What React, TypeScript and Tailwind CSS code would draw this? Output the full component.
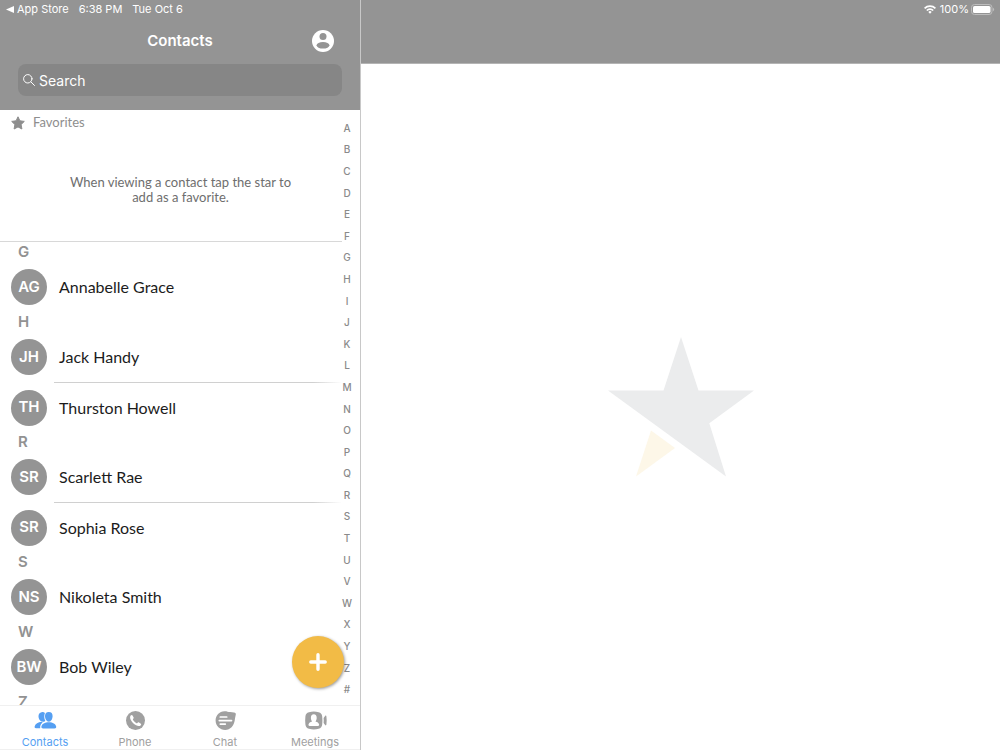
import type { ReactNode } from "react";

type Contact = { initials: string; name: string };
type Section = { letter: string; contacts: Contact[] };

const sections: Section[] = [
  { letter: "G", contacts: [{ initials: "AG", name: "Annabelle Grace" }] },
  {
    letter: "H",
    contacts: [
      { initials: "JH", name: "Jack Handy" },
      { initials: "TH", name: "Thurston Howell" },
    ],
  },
  {
    letter: "R",
    contacts: [
      { initials: "SR", name: "Scarlett Rae" },
      { initials: "SR", name: "Sophia Rose" },
    ],
  },
  { letter: "S", contacts: [{ initials: "NS", name: "Nikoleta Smith" }] },
  { letter: "W", contacts: [{ initials: "BW", name: "Bob Wiley" }] },
  { letter: "Z", contacts: [] },
];

const indexLetters = "ABCDEFGHIJKLMNOPQRSTUVWXYZ#".split("");

function StatusLeft() {
  return (
    <div className="flex h-[18px] items-center pl-[6px] text-[11px] text-white">
      <svg className="mr-[3px] h-[7px] w-2" viewBox="0 0 8 7" fill="currentColor" aria-hidden="true">
        <path d="M8 0v7L0 3.5z" />
      </svg>
      <a href="#app-store">App Store</a>
      <span className="ml-[10px]">6:38 PM</span>
      <span className="ml-[10px]">Tue Oct 6</span>
    </div>
  );
}

function StatusRight() {
  return (
    <div className="flex h-[18px] items-center justify-end pr-[5px] text-[11px] text-white">
      <svg className="mr-1 h-[9px] w-3" viewBox="0 0 24 18" fill="none" stroke="currentColor" strokeWidth="3.4" aria-hidden="true">
        <path d="M1.2 6.6a15.3 15.3 0 0 1 21.6 0M5.6 11a9 9 0 0 1 12.8 0" />
        <path d="M12 17.5l-3.4-3.6a4.8 4.8 0 0 1 6.8 0z" fill="currentColor" stroke="none" />
      </svg>
      <span>100%</span>
      <svg className="ml-[2px] h-[11px] w-6" viewBox="0 0 24 11" aria-hidden="true">
        <rect x="0.5" y="0.5" width="20.5" height="10" rx="3" fill="none" stroke="#bdbdbd" />
        <rect x="2" y="2" width="17.5" height="7" rx="1.6" fill="#fff" />
        <path d="M22 3.8c1.6.5 1.6 2.9 0 3.4z" fill="#bdbdbd" />
      </svg>
    </div>
  );
}

function ContactsIcon() {
  return (
    <svg className="h-[19px] w-[23px]" viewBox="0 0 23 19" fill="currentColor" aria-hidden="true">
      <path d="M7.6 1.200c1.200-.3 2.600 0 3.300.8-.9 2.300-.9 5.600.4 7.700-.4.700-1.200 1-2.300 1-2.700 0-4.500-2.500-4.500-5.400 0-2.300 1.200-3.800 3.100-4.100z" />
      <path d="M7.700 10.800c.5 0 1 .5.700 1-1.700 1.300-2.400 3.100-2.200 5.500H2c-1.200 0-1.600-.9-1.300-2 .7-2.400 3.300-4.300 7-4.500z" />
      <path d="M14.800 1c2.600 0 3.800 1.600 3.800 4.100 0 2.900-1.500 5.600-3.800 5.600S11 8 11 5.100C11 2.600 12.200 1 14.800 1z" />
      <path d="M14.800 11.200c4 0 7 1.800 7.400 4.300.2 1.300-.5 1.900-1.700 1.900H9.100c-1.200 0-1.900-.6-1.700-1.900.4-2.500 3.400-4.300 7.400-4.300z" />
    </svg>
  );
}

function PhoneIcon() {
  return (
    <svg className="h-[19px] w-[19px]" viewBox="0 0 20 20" aria-hidden="true">
      <circle cx="10" cy="10" r="10" fill="currentColor" />
      <path
        d="M4.900 4.700c.7-.8 1.500-.7 2 .1l1 1.700c.4.700.2 1.200-.4 1.700-.4.400-.3.900.1 1.500.9 1.300 1.800 2.200 3 2.900.6.400 1 .4 1.400-.1.500-.6 1-.7 1.700-.3l1.600.9c.8.500.9 1.100.3 1.800-1.200 1.300-3 1.200-5 .2-2.500-1.300-4.400-3.300-5.500-5.600-.9-1.900-1.100-3.700-.2-4.800z"
        fill="#fff"
      />
    </svg>
  );
}

function ChatIcon() {
  return (
    <svg className="h-[19px] w-[21px]" viewBox="0 0 21 19" aria-hidden="true">
      <path
        d="M9.500.2c2.300-.1 3.600.7 5.700.9l3.800.3c1.500.1 2 .9 1.800 2.200-.4 2.200-.7 3.400-1 5.500C19 15 15.200 19 10.200 19 4.900 19 .6 14.900.6 9.600S4.300.4 9.500.2z"
        fill="currentColor"
      />
      <path d="M5.300 6h6.400M4.300 9.600h12.200M5.300 13.100h5" stroke="#fff" strokeWidth="1.700" strokeLinecap="round" />
    </svg>
  );
}

function MeetingsIcon() {
  return (
    <svg className="h-[19px] w-[23px]" viewBox="0 0 23 19" fill="currentColor" aria-hidden="true">
      <path d="M5 1.200c3.200-.9 6.400-.9 9.600 0 2.300.6 3.300 1.800 3.600 4.200.3 2.800.3 5.400 0 8.200-.3 2.400-1.300 3.600-3.600 4.200-3.200.9-6.400.9-9.600 0-2.300-.6-3.300-1.800-3.600-4.200-.3-2.800-.3-5.400 0-8.200C1.700 3 2.700 1.800 5 1.200z" />
      <path
        d="M9.800 3.200c1.900 0 2.900 1.400 2.900 3.600 0 1.600-.5 2.800-1.200 3.700 1.900.4 3.300 1.500 3.600 3 .2.900-.3 1.400-1.100 1.400H5.600c-.8 0-1.300-.5-1.100-1.400.3-1.500 1.700-2.600 3.600-3-.7-.9-1.200-2.100-1.200-3.700 0-2.200 1-3.600 2.900-3.600z"
        fill="#fff"
      />
      <path d="M19.600 7l1.500-2c.6-.7 1.200-.5 1.300.4.400 2.800.4 5.400 0 8.200-.1.900-.7 1.100-1.300.4l-1.500-2c.2-1.700.2-3.300 0-5z" />
    </svg>
  );
}

const tabs: { label: string; icon: ReactNode; active?: boolean }[] = [
  { label: "Contacts", icon: <ContactsIcon />, active: true },
  { label: "Phone", icon: <PhoneIcon /> },
  { label: "Chat", icon: <ChatIcon /> },
  { label: "Meetings", icon: <MeetingsIcon /> },
];

function SidebarHeader() {
  return (
    <header className="bg-[#949494] pb-[14px]">
      <StatusLeft />
      <div className="grid h-[46px] grid-cols-[1fr_auto_1fr] items-center px-[26px]">
        <h1 className="col-start-2 text-[15px] font-semibold text-white">Contacts</h1>
        <button type="button" aria-label="Profile" className="justify-self-end">
          <svg className="h-[22px] w-[22px]" viewBox="0 0 22 22" aria-hidden="true">
            <circle cx="11" cy="11" r="11" fill="#fff" />
            <circle cx="11" cy="6.600" r="3.500" fill="#949494" />
            <ellipse cx="11" cy="15.300" rx="6.400" ry="3.300" fill="#949494" />
          </svg>
        </button>
      </div>
      <label className="mx-[18px] flex h-8 items-center gap-1 rounded-lg bg-[#868686] px-[5px] text-white">
        <svg className="h-3 w-3 shrink-0" viewBox="0 0 12 12" fill="none" stroke="currentColor" strokeWidth="1" strokeLinecap="round" aria-hidden="true">
          <circle cx="4.800" cy="4.800" r="4.200" />
          <path d="M8 8l3.500 3.500" />
        </svg>
        <input
          type="text"
          placeholder="Search"
          aria-label="Search"
          className="min-w-0 flex-1 bg-transparent text-[14px] text-white outline-none placeholder:text-white"
        />
      </label>
    </header>
  );
}

function Favorites() {
  return (
    <section className="flex h-[132px] flex-col border-b border-[#d8d8d8]">
      <h2 className="flex h-[25px] items-center gap-2 pl-[11px] font-[Lato,sans-serif] text-[13px] text-[#8e8e8e]">
        <svg className="h-[14px] w-[14px]" viewBox="0 0 14 14" fill="#8e8e8e" stroke="#8e8e8e" strokeWidth="1" strokeLinejoin="round" aria-hidden="true">
          <path d="M7 .8l1.900 4 4.400.6-3.200 3.100.8 4.500L7 10.900 3.100 13l.8-4.500L.7 5.400l4.400-.6z" />
        </svg>
        Favorites
      </h2>
      <p className="mt-10 ml-[19px] px-12 text-center font-[Lato,sans-serif] text-[13px] leading-[15px] text-[#6e6e6e]">
        When viewing a contact tap the star to add as a favorite.
      </p>
    </section>
  );
}

function ContactSection({ section }: { section: Section }) {
  return (
    <section>
      <h2 className="flex h-5 items-center pl-[18px] text-[15px] leading-5 font-semibold text-[#929292]">{section.letter}</h2>
      <ul>
        {section.contacts.map((contact, i) => (
          <li key={contact.name} className="flex h-[50px] flex-col">
            {i > 0 && <div className="ml-[54px] h-px shrink-0 bg-linear-to-r from-[#d0d0d0] from-90% to-transparent" />}
            <a href="#contact" className="flex min-h-0 flex-1 items-center gap-3 pl-[11px]">
              <span className="flex size-9 items-center justify-center rounded-full bg-[#949494] text-[15px] font-semibold text-white">
                {contact.initials}
              </span>
              <span className="font-[Lato,sans-serif] text-[16px] text-[#1c1c1c]">{contact.name}</span>
            </a>
          </li>
        ))}
      </ul>
    </section>
  );
}

function TabBar() {
  return (
    <nav className="grid h-[45px] shrink-0 grid-cols-4 border-y border-[#f0f0f0]">
      {tabs.map((tab) => (
        <a
          key={tab.label}
          href={"#" + tab.label.toLowerCase()}
          className={
            tab.active
              ? "flex flex-col items-center pt-[5px] text-[#559ff2]"
              : "flex flex-col items-center pt-[5px] text-[#a0a0a0]"
          }
        >
          {tab.icon}
          <span className="mt-[5px] text-[11px] leading-[14px]">{tab.label}</span>
        </a>
      ))}
    </nav>
  );
}

export default function App() {
  return (
    <div className="flex h-screen bg-white font-[Inter,sans-serif]">
      <aside className="flex w-[361px] shrink-0 flex-col border-r border-[#c8c8c8]">
        <SidebarHeader />
        <div className="relative flex min-h-0 flex-1">
          <div className="min-w-0 flex-1 overflow-hidden">
            <Favorites />
            {sections.map((section) => (
              <ContactSection key={section.letter} section={section} />
            ))}
          </div>
          <nav aria-label="Alphabet index" className="flex w-[18px] shrink-0 flex-col pt-[7px] pr-2 pb-[5px] text-[10px] font-medium text-[#8a8a8a]">
            {indexLetters.map((letter) => (
              <a key={letter} href="#index" className="flex min-h-0 flex-1 items-center justify-center leading-none">
                {letter}
              </a>
            ))}
          </nav>
          <button
            type="button"
            aria-label="Add contact"
            className="absolute right-4 bottom-[17px] flex size-[52px] items-center justify-center rounded-full bg-[#f2bb46] shadow-[1px_1px_3px_rgba(0,0,0,0.4)]"
          >
            <svg className="h-[18px] w-[18px]" viewBox="0 0 18 18" stroke="#fff" strokeWidth="3.400" strokeLinecap="round" aria-hidden="true">
              <path d="M9 1.800v14.400M1.800 9h14.400" />
            </svg>
          </button>
        </div>
        <TabBar />
      </aside>
      <main className="flex min-w-0 flex-1 flex-col">
        <header className="h-16 shrink-0 border-b border-[#b4b4b4] bg-[#949494]">
          <StatusRight />
        </header>
        <div className="flex flex-1 items-center justify-center">
          <svg className="h-[140px] w-[146px]" viewBox="0 0 146 140" aria-label="Star logo" role="img">
            <path d="M73 0l17.500 53.500H146l-44.700 32.800L118 139.500 0 53.500h55.500z" fill="#ebeced" />
            <path d="M43 93.500l24 17.600-39 28.400z" fill="#fdf7e8" />
          </svg>
        </div>
      </main>
    </div>
  );
}
